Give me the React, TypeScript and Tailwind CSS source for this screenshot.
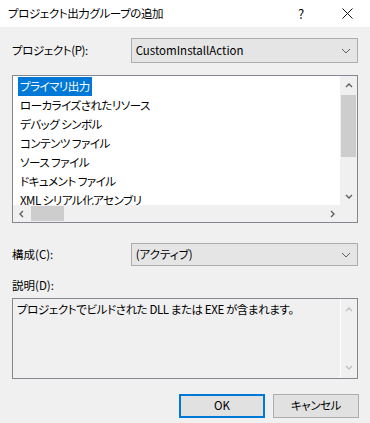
import React from "react"

const FONT = { fontFamily: '"Noto Sans CJK JP", "Noto Sans", sans-serif' }

const ITEMS = [
  "プライマリ出力",
  "ローカライズされたリソース",
  "デバッグ シンボル",
  "コンテンツ ファイル",
  "ソース ファイル",
  "ドキュメント ファイル",
  "XML シリアル化アセンブリ",
]

function Chevron({ dir, color = "#606060", size = 8 }: { dir: "up" | "down" | "left" | "right"; color?: string; size?: number }) {
  const pts = {
    up: "1,6 4,3 7,6",
    down: "1,2 4,5 7,2",
    left: "5,1 2,4 5,7",
    right: "3,1 6,4 3,7",
  }[dir]
  return (
    <svg width={size} height={size} viewBox="0 0 8 8">
      <polyline points={pts} fill="none" stroke={color} strokeWidth="1.4" />
    </svg>
  )
}

function Combo({ value, h }: { value: string; h: string }) {
  return (
    <div className={`flex items-center justify-between w-[228px] ${h} bg-[#e5e5e5] border border-[#adadad] pl-[4px] pr-[6px]`}>
      <span className="text-[11.5px] text-black">{value}</span>
      <svg width="10" height="6" viewBox="0 0 10 6">
        <polyline points="1,1 5,5 9,1" fill="none" stroke="#606060" strokeWidth="1" />
      </svg>
    </div>
  )
}

export default function App() {
  return (
    <div className="w-[370px] h-[423px] bg-[#f0f0f0] flex flex-col text-black [font-feature-settings:'palt']" style={FONT}>
      {/* title bar */}
      <div className="h-[27px] bg-white flex items-center pl-[8px] shrink-0">
        <span className="text-[11.5px] tracking-[-0.4px] flex-1">プロジェクト出力グループの追加</span>
        <span className="text-[13px] w-[46px] text-center">?</span>
        <div className="w-[46px] flex justify-center">
          <svg width="11" height="11" viewBox="0 0 11 11">
            <path d="M0.5 0.5 L10.5 10.5 M10.5 0.5 L0.5 10.5" stroke="#111" strokeWidth="1" />
          </svg>
        </div>
      </div>

      <div className="flex flex-col px-[12px] text-[11.5px]">
        <div className="flex items-center mt-[11px]">
          <span className="w-[119px] tracking-[-0.4px]">プロジェクト(P):</span>
          <Combo value="CustomInstallAction" h="h-[25px]" />
        </div>

        {/* list box */}
        <div className="mt-[12px] h-[148px] border border-[#828790] bg-white flex flex-col">
          <div className="flex flex-1 min-h-0">
            <div className="flex-1 overflow-hidden pt-[1px] pl-[5px] tracking-[-0.5px]">
              {ITEMS.map((t, i) => (
                <div key={i} className="h-[19px] leading-[19px] whitespace-nowrap">
                  <span className={i === 0 ? "inline-block px-[2px] bg-[#0078d7] text-white" : "inline-block px-[2px]"}>{t}</span>
                </div>
              ))}
            </div>
            <div className="w-[17px] bg-[#f0f0f0] flex flex-col">
              <div className="h-[17px] flex items-center justify-center"><Chevron dir="up" /></div>
              <div className="flex-1 flex flex-col pt-[2px]">
                <div className="h-[62px] bg-[#cdcdcd] mx-[1px]" />
              </div>
              <div className="h-[17px] flex items-center justify-center"><Chevron dir="down" /></div>
            </div>
          </div>
          <div className="h-[17px] flex bg-[#f0f0f0]">
            <div className="flex-1 flex items-center">
              <div className="w-[17px] flex justify-center"><Chevron dir="left" /></div>
              <div className="w-[33px] h-[15px] bg-[#cdcdcd] ml-[1px]" />
              <div className="flex-1" />
              <div className="w-[17px] flex justify-center"><Chevron dir="right" /></div>
            </div>
            <div className="w-[17px]" />
          </div>
        </div>

        <div className="flex items-center mt-[20px]">
          <span className="w-[119px]">構成(C):</span>
          <Combo value="(アクティブ)" h="h-[23px]" />
        </div>

        <div className="mt-[12px] h-[14px] leading-[14px]">説明(D):</div>

        {/* description */}
        <div className="mt-[6px] h-[81px] border border-[#828790] bg-[#f0f0f0] flex">
          <div className="flex-1 pl-[4px] pt-[2px] leading-[17px] whitespace-nowrap tracking-[-0.4px]">プロジェクトでビルドされた DLL または EXE が含まれます。</div>
          <div className="w-[17px] border-l border-white flex flex-col justify-between py-[6px] items-center">
            <Chevron dir="up" color="#c0c0c0" />
            <Chevron dir="down" color="#c0c0c0" />
          </div>
        </div>

        <div className="flex justify-end gap-[8px] mt-[15px] mr-[-1px]">
          <button className="w-[86px] h-[24px] bg-[#e1e1e1] border-2 border-[#0078d7] text-[11.5px]">OK</button>
          <button className="w-[86px] h-[24px] bg-[#e1e1e1] border border-[#adadad] text-[11.5px] tracking-[-0.4px]">キャンセル</button>
        </div>
      </div>
    </div>
  )
}
